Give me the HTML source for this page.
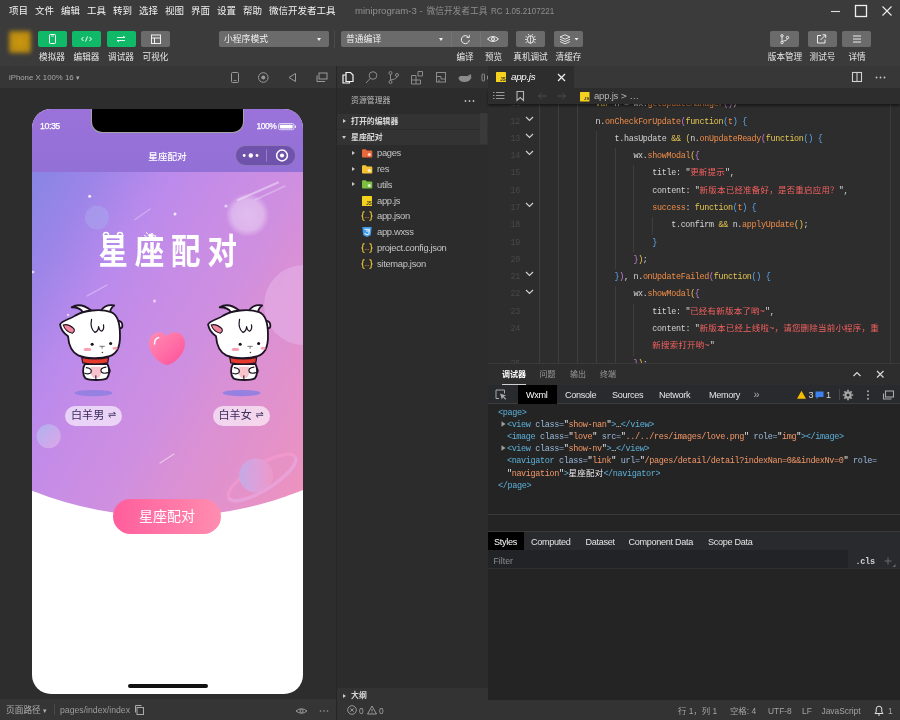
<!DOCTYPE html>
<html lang="zh-CN">
<head>
<meta charset="utf-8">
<title>微信开发者工具</title>
<style>
*{box-sizing:border-box;margin:0;padding:0}
html,body{width:900px;height:720px;overflow:hidden;background:#2d2d2d}
body{font-family:"Liberation Sans","Noto Sans CJK SC",sans-serif;font-size:9.3px;color:#ddd;position:relative;-webkit-font-smoothing:antialiased}
.a{position:absolute}
svg{position:absolute;overflow:visible}
/* ---------- top bars ---------- */
#top,#sim,#phone,#ide{will-change:transform}
#top{position:absolute;left:0;top:0;width:900px;height:66px;background:#3b3b3b}
#menu{position:absolute;left:9px;top:3px;height:16px;line-height:16px;font-size:9.5px;color:#f2f2f2;white-space:nowrap}
#menu span{display:inline-block;width:26px}
#wtitle{position:absolute;left:355px;top:3px;line-height:16px;font-size:9.6px;color:#8f8f8f;white-space:nowrap}
.tb{position:absolute;top:31px;height:16px;border-radius:2px;background:#6b6b6b}
.tb.g{background:#10b968}
.tl{position:absolute;top:49.5px;height:14px;line-height:14px;font-size:8.6px;color:#e6e6e6;text-align:center;white-space:nowrap;width:60px;margin-left:-30px}
.sel{position:absolute;top:31px;height:16px;border-radius:2px;background:#6b6b6b;color:#eee;font-size:8.8px;line-height:16px;padding-left:5px}
.sel:after{content:"";position:absolute;right:8px;top:7px;border:2.5px solid transparent;border-top:3px solid #f0f0f0}
/* ---------- simulator ---------- */
#sim{position:absolute;left:0;top:66px;width:336px;height:654px;background:#2d2d2d}
#simhead{position:absolute;left:0;top:0;width:336px;height:22px;background:#363636;font-size:7.8px;color:#a8a8a8;line-height:23px;padding-left:9px}
#simfoot{position:absolute;left:0;bottom:0;width:336px;height:21px;background:#353535;font-size:8.700px;color:#b0b0b0;line-height:22px}
#phone{position:absolute;left:32px;top:109px;width:271px;height:585px;border-radius:19px;background:#fff;overflow:hidden}
/* ---------- phone ---------- */
#phone .pg{position:absolute;left:0;top:63px;width:271px;height:346px;background:linear-gradient(120deg,#8785e3 0%,#9d85e8 14%,#b98aec 28%,#c58ce7 40%,#cf8fe0 57%,#d890d6 66%,#e892c4 91%,#f293ba 100%)}
#phone .nav{position:absolute;left:0;top:0;width:271px;height:63px;background:linear-gradient(#9a72da,#9270d6)}
#phone .notch{position:absolute;left:59px;top:-2px;width:153px;height:25.500px;background:#000;border-radius:0 0 11px 11px;border:1px solid rgba(255,255,255,.65);border-top:0}
#phone .st{color:#fff;font-size:8.800px;line-height:12px;letter-spacing:-.45px;-webkit-text-stroke:.25px #fff}
#phone .ttl{left:0;top:41px;width:271px;text-align:center;color:#fff;font-size:9.600px;line-height:14px;font-weight:500}
#phone .cap{position:absolute;left:203.400px;top:35.600px;width:61px;height:21.600px;border-radius:10.800px;background:rgba(60,40,110,.42);border:.7px solid rgba(255,255,255,.22)}
#phone .logo{left:66.500px;top:124px;width:150px;text-align:left;color:#fff;font-size:29.500px;line-height:38px;height:38px;font-weight:700;letter-spacing:6.800px;white-space:nowrap;transform:scale(1,1.2);transform-origin:0 50%}
#phone .pill{top:297px;width:57px;height:19.500px;border-radius:10px;background:rgba(255,255,255,.62);color:#3b2d5c;font-size:11.100px;line-height:19px;text-align:center;white-space:nowrap}
#phone .pill b{font-weight:normal;font-size:9.800px;position:relative;top:-.6px;margin-left:.5px;font-family:'DejaVu Sans',sans-serif}
#phone .btn{left:81px;top:389.500px;width:108px;height:35.500px;border-radius:18px;background:linear-gradient(90deg,#ff5e9c,#ff8db0);color:#fff;font-size:14px;line-height:35px;text-align:center}
#phone .home{left:95.500px;top:575px;width:80.500px;height:4px;border-radius:2px;background:#111}

/* ---------- IDE ---------- */
#ide{position:absolute;left:336px;top:66px;width:564px;height:654px;background:#2d2d2d;overflow:hidden}
#ide .vdiv{position:absolute;left:0;top:0;width:1px;height:654px;background:#262626}
#act{position:absolute;left:1px;top:0;width:151px;height:22px;background:#333}
#side{position:absolute;left:1px;top:22px;width:151px;height:612px;background:#2c2c2c}
#side .hd{position:absolute;left:14px;top:6px;font-size:7.900px;line-height:14px;color:#bdbdbd;white-space:nowrap}
#side .sec{position:absolute;left:0;width:151px;height:15px;background:#333;font-size:7.900px;font-weight:bold;color:#d8d8d8;line-height:15px;padding-left:14px;white-space:nowrap}
#side .sec i{position:absolute;left:5.500px;top:5px;border:2.500px solid transparent;border-left:3.500px solid #c8c8c8;border-right:0}
#side .sec i.d{left:4.500px;top:6px;border:2.500px solid transparent;border-top:3.500px solid #c8c8c8;border-bottom:0}
#side .row{position:absolute;left:40px;height:16px;line-height:16px;font-size:9.400px;color:#c4c4c4;white-space:nowrap;letter-spacing:-.32px}
#side .ar{position:absolute;left:14.500px;border:2.500px solid transparent;border-left:3.500px solid #c8c8c8;border-right:0}
#side .sb{position:absolute;left:143px;top:25px;width:7px;height:31px;background:#3a3a3a}
#tabs{position:absolute;left:152px;top:0;width:412px;height:22px;background:#373737}
#tabs .tab{position:absolute;left:0;top:0;width:86px;height:22px;background:#2d2d2d}
#tabs .tn{position:absolute;left:23px;top:4px;font-size:9.800px;line-height:14px;font-style:italic;color:#fff;letter-spacing:-.3px}
#crumb{position:absolute;left:152px;top:22px;width:412px;height:16px;background:#2d2d2d;z-index:3;box-shadow:0 1.500px 2px rgba(0,0,0,.45)}
#crumb .ct{position:absolute;left:106px;top:1px;font-size:9.500px;line-height:14px;color:#b8b8b8;white-space:nowrap;letter-spacing:-.2px}
.code{position:absolute;left:0;top:38px;width:564px;height:260px;overflow:hidden}
.code .cl,.wx .cl{position:absolute;white-space:pre;font-family:"Liberation Mono","Noto Sans CJK SC",monospace;font-size:8.400px;letter-spacing:-.300px;line-height:17.280px;height:17.280px;color:#d4d4d4}
.cj{letter-spacing:.2px;font-size:8.500px}
.code .ln{position:absolute;left:166px;width:18px;text-align:right;font-family:"Liberation Mono",monospace;font-size:8.400px;letter-spacing:-.300px;line-height:17.280px;color:#484848}
.code .fd{position:absolute;left:189px}
.code .gd{position:absolute;width:1px;height:17.400px;background:#3e3e3e}
#panel{position:absolute;left:152px;top:297px;width:412px;height:337px;background:#242425;border-top:1px solid #3a3a3a}
#panel .ph{position:absolute;left:0;top:0;width:412px;height:21px;background:#2d2d2d}
#panel .ph span{position:absolute;top:3.500px;font-size:8px;line-height:14px;color:#9a9a9a;white-space:nowrap}
#panel .dt{position:absolute;left:0;top:21px;width:412px;height:18.500px;background:#292a2d;border-bottom:1px solid #3c3c3c}
#panel .dt span,#panel .st span{position:absolute;top:2.500px;font-size:9.100px;line-height:14px;color:#e4e4e4;white-space:nowrap;letter-spacing:-.3px}
#panel .sel{position:absolute;background:#000;top:0;height:18.500px;border-radius:0;padding:0}
#panel .sel:after{display:none}
.wx{position:absolute;left:0;top:22px;width:412px;height:110px}
.wx .cl{line-height:12px;height:12px;font-size:8.500px;letter-spacing:-.360px}
.wx svg{position:absolute}
#panel .hr{position:absolute;left:0;top:149.500px;width:412px;height:1px;background:#3a3a3a}
#panel .st{position:absolute;left:0;top:167px;width:412px;height:19px;background:#292a2d;border-top:1px solid #3a3a3a}
#panel .fl{position:absolute;left:0;top:186px;width:412px;height:18.500px;background:linear-gradient(90deg,#222326 360px,#292a2d 360px);border-bottom:1px solid #303030;font-size:8.800px;line-height:22px;color:#8c8c8c;padding-left:5.500px}
#status{position:absolute;left:1px;top:634px;width:563px;height:20px;background:#333;font-size:8.400px;color:#a4a4a4}
#status span{position:absolute;top:4px;line-height:14px;white-space:nowrap}
#ide .vs{position:absolute;left:553.500px;top:38px;width:1px;height:259px;background:#3c3c3c}
#ide .vs2{position:absolute;left:561.500px;top:38px;width:2.500px;height:596px;background:#343434}

</style>
</head>
<body>
<div id="top">
  <div id="menu"><span>项目</span><span>文件</span><span>编辑</span><span>工具</span><span>转到</span><span>选择</span><span>视图</span><span>界面</span><span>设置</span><span>帮助</span><span style="width:auto">微信开发者工具</span></div>
  <div id="wtitle">miniprogram-3 - <span style="position:absolute;left:71.500px;top:0;font-size:8.700px">微信开发者工具</span><span style="position:absolute;left:136px;top:0;display:inline-block;transform:scaleX(.84);transform-origin:0 50%">RC 1.05.2107221</span></div>
  <!-- window controls -->
  <svg class="a" style="left:826px;top:0" width="74" height="22" viewBox="0 0 74 22">
    <path d="M5 11.5h9" stroke="#ddd" stroke-width="1.1" fill="none"/>
    <rect x="29.5" y="5.5" width="11" height="11" stroke="#eee" stroke-width="1.3" fill="none"/>
    <path d="M56.5 6.5l9 9M65.5 6.5l-9 9" stroke="#eee" stroke-width="1.1" fill="none"/>
  </svg>
  <!-- avatar -->
  <div class="a" style="left:9px;top:31px;width:22px;height:22px;border-radius:2px;background:radial-gradient(circle,#cc970e 10%,#a88014 100%);filter:blur(2px)"></div>
  <!-- left buttons -->
  <div class="tb g" style="left:37.500px;width:29px"></div>
  <div class="tb g" style="left:72px;width:29px"></div>
  <div class="tb g" style="left:106.5px;width:29px"></div>
  <div class="tb" style="left:141px;width:29px"></div>
  <div class="tl" style="left:52px">模拟器</div>
  <div class="tl" style="left:86.5px">编辑器</div>
  <div class="tl" style="left:121px">调试器</div>
  <div class="tl" style="left:155.5px">可视化</div>
  <svg class="a" style="left:38px;top:31px" width="132" height="16" viewBox="0 0 132 16" fill="none" stroke="#fff" stroke-width="1">
    <rect x="11.5" y="3.5" width="6" height="9" rx="0.8"/><path d="M13 5h3" stroke-width=".8"/>
    <path d="M45.5 6l-2 2 2 2M51.500 6l2 2-2 2M49.500 5.500l-2 5"/>
    <path d="M79 6.500h8l-2-1.500M87 9.500h-8l2 1.500" stroke-width=".9"/>
    <rect x="113.500" y="4" width="9" height="8.500" stroke="#f0f0f0"/><path d="M113.500 7h9M116.500 7v5.500" stroke="#f0f0f0"/>
  </svg>
  <!-- selects -->
  <div class="sel" style="left:219px;width:109.500px">小程序模式</div>
  <div class="a" style="left:334px;top:30px;width:1px;height:18px;background:#4a4a4a"></div>
  <div class="sel" style="left:341px;width:110px;border-radius:2px 0 0 2px">普通编译</div>
  <div class="tb" style="left:451px;width:28.500px;border-radius:0;border-left:1px solid #747474"></div>
  <div class="tb" style="left:479.500px;width:28px;border-radius:0 2px 2px 0;border-left:1px solid #747474"></div>
  <div class="tb" style="left:516px;width:29px"></div>
  <div class="tb" style="left:553.500px;width:29px"></div>
  <div class="tl" style="left:465px">编译</div>
  <div class="tl" style="left:493.500px">预览</div>
  <div class="tl" style="left:530.500px">真机调试</div>
  <div class="tl" style="left:568.500px">清缓存</div>
  <svg class="a" style="left:451px;top:31px" width="132" height="16" viewBox="0 0 132 16" fill="none" stroke="#eee" stroke-width="1">
    <path d="M17.500 6.200a4 4 0 1 0 .8 3"/><path d="M18.300 3.800v2.700h-2.700" stroke-width=".9"/>
    <path d="M36.500 8q5.500-5 11 0q-5.500 5-11 0z"/><circle cx="42" cy="8" r="1.500"/>
    <ellipse cx="79.500" cy="8.500" rx="3" ry="3.800"/><path d="M79.500 5v7.300M76.500 6.500l-2-1.200M82.500 6.500l2-1.200M76.300 8.500h-2.300M82.700 8.500h2.300M76.500 10.500l-2 1.200M82.500 10.500l2 1.200M78 4.500l-.8-1.500M81 4.500l.8-1.500" stroke-width=".8"/>
    <path d="M109 6l5-2.200 5 2.200-5 2.200zM109 8.300l5 2.200 5-2.200M109 10.600l5 2.200 5-2.200" stroke-width=".9"/>
    <path d="M123.500 7h4l-2 2.500z" fill="#eee" stroke="none"/>
  </svg>
  <!-- right buttons -->
  <div class="tb" style="left:770px;width:29px"></div>
  <div class="tb" style="left:807.500px;width:29px"></div>
  <div class="tb" style="left:842.200px;width:29px"></div>
  <div class="tl" style="left:785px">版本管理</div>
  <div class="tl" style="left:822.500px">测试号</div>
  <div class="tl" style="left:857px">详情</div>
  <svg class="a" style="left:770px;top:31px" width="102" height="16" viewBox="0 0 102 16" fill="none" stroke="#eee" stroke-width="1">
    <circle cx="12" cy="4.800" r="1.200"/><circle cx="12" cy="11.500" r="1.200"/><circle cx="17.500" cy="6.500" r="1.200"/><path d="M12 6v4.300M17.500 7.700q0 2-5 2.600" stroke-width=".9"/>
    <path d="M51 4.500h-3.500v7.500h7.500v-3.500M50.500 9l5-5M52.500 3.800h3.200v3.200"/>
    <path d="M83 5h8M83 8h8M83 11h8"/>
  </svg>
</div>

<div id="sim">
  <div id="simhead">iPhone X 100% 16 <span style="font-size:7px">▾</span></div>
  <svg class="a" style="left:225px;top:0" width="110" height="22" viewBox="0 0 110 22" fill="none" stroke="#9a9a9a" stroke-width="1">
    <rect x="6.500" y="6.500" width="7" height="10" rx="1"/><path d="M8.500 14.500h3" stroke-width=".8"/>
    <circle cx="38.300" cy="11.500" r="4.800"/><circle cx="38.300" cy="11.500" r="2" fill="#9a9a9a" stroke="none"/>
    <path d="M70.500 7.500v8l-6.500-4z"/>
    <rect x="94" y="7" width="8" height="6"/><path d="M92 9.500v6h8"/>
  </svg>
  <div id="simfoot">
    <span class="a" style="left:6px;top:0">页面路径 <span style="font-size:7px">▾</span></span>
    <span class="a" style="left:54px;top:5px;width:1px;height:11px;background:#4a4a4a"></span>
    <span class="a" style="left:60px;top:0;color:#9c9c9c">pages/index/index</span>
    <svg class="a" style="left:134px;top:5px" width="12" height="12" viewBox="0 0 12 12" fill="none" stroke="#aaa" stroke-width="1"><rect x="3" y="3.500" width="6.500" height="7"/><path d="M1.500 8.500v-7h6"/></svg>
    <svg class="a" style="left:294.500px;top:6.500px" width="40" height="10" viewBox="0 0 40 10" fill="none" stroke="#9a9a9a" stroke-width="1"><path d="M1 5q5.500-4.500 11 0q-5.500 4.500-11 0z"/><circle cx="6.500" cy="5" r="1.500"/><circle cx="25.500" cy="5" r=".8" fill="#9a9a9a" stroke="none"/><circle cx="29" cy="5" r=".8" fill="#9a9a9a" stroke="none"/><circle cx="32.500" cy="5" r=".8" fill="#9a9a9a" stroke="none"/></svg>
  </div>
</div>
<div id="phone"><div class="pg"></div>
<svg class="a" style="left:0;top:63px" width="271" height="360" viewBox="0 0 271 360">
  <defs>
    <radialGradient id="gl" cx="50%" cy="50%" r="50%"><stop offset="0" stop-color="#fff" stop-opacity=".42"/><stop offset=".7" stop-color="#fff" stop-opacity=".34"/><stop offset="1" stop-color="#fff" stop-opacity="0"/></radialGradient>
    <linearGradient id="pl" x1="0" y1="0" x2="1" y2="0"><stop offset="0" stop-color="#b8b4f0"/><stop offset=".5" stop-color="#d8a8e4"/><stop offset="1" stop-color="#f09cc8"/></linearGradient>
    <linearGradient id="hg" x1="0" y1="0" x2="1" y2="1"><stop offset="0" stop-color="#ff8cb4"/><stop offset=".5" stop-color="#ff6fa6"/><stop offset="1" stop-color="#ff4f98"/></linearGradient>
    <linearGradient id="c3" x1="0" y1="0" x2="1" y2="1"><stop offset="0" stop-color="#a9c2f2" stop-opacity=".7"/><stop offset="1" stop-color="#e9b0e6" stop-opacity=".7"/></linearGradient>
  </defs>
  <!-- decorative circles -->
  <circle cx="65" cy="45.500" r="12" fill="#a9a4ee" opacity=".6"/>
  <circle cx="215.500" cy="43" r="22" fill="url(#gl)"/>
  <circle cx="272" cy="133" r="40" fill="#e6b4ea" opacity=".55"/>
  <circle cx="16.700" cy="264.300" r="12" fill="url(#c3)"/>
  <!-- streaks -->
  <g stroke="#fff" stroke-linecap="round" fill="none">
    <path d="M103 47.500L118 37" stroke-width="1.400" opacity=".3"/>
    <path d="M206 28L246 10.500" stroke-width="2" opacity=".4"/>
    <path d="M223 28L253 14" stroke-width="1.600" opacity=".28"/>
    <path d="M55 124L75 113" stroke-width="1.400" opacity=".35"/>
    <path d="M128 291L142 282" stroke-width="1.200" opacity=".5"/>
  </g>
  <!-- stars -->
  <g fill="#fff">
    <circle cx="57.700" cy="24.300" r="1.500" opacity=".85"/>
    <circle cx="143" cy="42" r="1.500" opacity=".8"/>
    <circle cx="194" cy="34" r="1.600" opacity=".6"/>
    <circle cx="1" cy="100" r="1.300" opacity=".7"/>
    <circle cx="122.500" cy="129" r="1.500" opacity=".6"/>
    <circle cx="36" cy="143" r="1.300" opacity=".6"/>
  </g>
  <!-- planet -->
  <g opacity=".7">
    <ellipse cx="230" cy="305.500" rx="39" ry="12.500" transform="rotate(-32 230 305.500)" fill="none" stroke="#f59bd0" stroke-width="3.200"/>
    <circle cx="224" cy="303.500" r="17" fill="url(#pl)"/>
    <path d="M-39 0a39 12.500 0 0 0 78 0" transform="translate(230 305.500) rotate(-32)" fill="none" stroke="#e9a9e2" stroke-width="3.200"/>
  </g>
</svg>
<!-- white arc bottom -->
<svg class="a" style="left:0;top:370px" width="271" height="60" viewBox="0 0 271 60"><path d="M0 11.800A366 366 0 0 0 271 11V60H0z" fill="#fff"/></svg>
<!-- nav -->
<div class="nav"></div>
<div class="notch"></div>
<div class="a st" style="left:8px;top:11px;">10:35</div>
<div class="a st" style="left:224.500px;top:11px;font-size:8.500px">100%</div>
<svg class="a" style="left:246.300px;top:13.800px" width="19" height="8" viewBox="0 0 19 8"><rect x=".5" y=".5" width="15.500" height="6.200" rx="1.600" fill="none" stroke="#fff" stroke-opacity=".75" stroke-width=".9"/><rect x="1.800" y="1.800" width="12.900" height="3.600" rx=".8" fill="#fff"/><rect x="16.800" y="2.300" width="1.200" height="2.600" rx=".5" fill="#fff" fill-opacity=".8"/></svg>
<div class="a ttl">星座配对</div>
<div class="cap"></div>
<svg class="a" style="left:204px;top:36px" width="60" height="21" viewBox="0 0 60 21"><circle cx="8.200" cy="10.500" r="1.400" fill="#fff"/><circle cx="14.800" cy="10.500" r="2.200" fill="#fff"/><circle cx="21" cy="10.500" r="1.400" fill="#fff"/><path d="M30.500 4.500v12" stroke="#fff" stroke-opacity=".35" stroke-width=".8"/><circle cx="46" cy="10.500" r="5.400" fill="none" stroke="#fff" stroke-width="1.500"/><circle cx="46" cy="10.500" r="2.100" fill="#fff"/></svg>
<!-- logo -->
<div class="a logo">星座配对</div>
<svg class="a" style="left:76px;top:120px" width="70" height="18" viewBox="0 0 70 18" fill="none" stroke="#fff" stroke-width="1.300" stroke-linecap="round"><path d="M43 6.500l1.300-2.200 1.300 2.200 2.300.4-1.700 1.700.4 2.400-2.300-1.100-2.300 1.100.4-2.400-1.700-1.700z" stroke-width="1"/><path d="M38.500 3.500l1.200 1.500M36.500 6.500l1.600.9" stroke-width="1"/></svg>
<svg class="a" style="left:66px;top:120px" width="40" height="12" viewBox="0 0 40 12" fill="none" stroke="#fff" stroke-width="1.500"><circle cx="8" cy="6" r="2.600"/><circle cx="22" cy="6" r="2.600"/></svg>
<!-- goats -->
<svg class="a goat" style="left:18px;top:186px" width="90" height="110" viewBox="0 0 589 720"><use href="#goat"/></svg>
<svg class="a goat" style="left:166px;top:186px" width="90" height="110" viewBox="0 0 589 720"><use href="#goat"/></svg>
<svg class="a" style="left:0;top:0" width="0" height="0"><defs><g id="goat">
  <ellipse cx="285" cy="642" rx="124" ry="21" fill="#9680e2"/>
  <g stroke="#1d1322" stroke-width="12" stroke-linejoin="round" stroke-linecap="round">
    <path d="M378 478q20 10 10 30" fill="none"/>
    <path d="M228 452C212 480 212 522 232 546C260 560 345 560 372 546C392 522 390 478 376 452z" fill="#fff"/>
    <path d="M268 470q-14 40 14 72h38q26-32 14-72z" fill="#f9c3cc" stroke="none"/>
    <path d="M238 476q42 6 30 32q-14 14 -40 4M366 472q-42 6 -30 32q14 14 40 4" fill="#fff" stroke-width="8"/>
    <path d="M300 528v24" fill="none" stroke-width="7"/>
    <path d="M208 408q88 20 176 0l-6 36q-82 16 -164 0z" fill="#e63a2e" stroke-width="8"/>
    <path d="M142 80Q200 46 268 100L215 114Q200 80 142 80z" fill="#fff"/>
    <path d="M335 102Q360 60 420 68Q395 85 392 116z" fill="#fff"/>
    <path d="M455 170q22 10 18 38q-6 14 -20 8" fill="#fff"/>
    <path d="M66 192C80 165 130 160 165 135C220 100 330 88 400 112C440 128 458 190 458 260C460 330 440 385 390 400C330 418 240 418 185 395C145 375 122 330 118 270C90 250 70 225 66 192z" fill="#fff"/>
    <path d="M86 196q34 -10 70 24q10 20 -10 30q-44 -8 -60 -54z" fill="#f2849c" stroke-width="7"/>
    <path d="M272 160q-12 60 22 85q22 -8 24 -38q6 28 20 30q18 -12 12 -42" fill="none" stroke-width="8"/>
  </g>
  <circle cx="276" cy="322" r="10" fill="#1d1322"/><circle cx="397" cy="318" r="10" fill="#1d1322"/>
  <ellipse cx="245" cy="356" rx="25" ry="11" fill="#f9a0b4"/><ellipse cx="426" cy="348" rx="17" ry="10" fill="#f9a0b4"/>
  <path d="M326 336h30M341 336v14" stroke="#555" stroke-width="5" fill="none" stroke-linecap="round"/><circle cx="343" cy="376" r="5" fill="#444"/>
</g></defs></svg>
<!-- heart -->
<svg class="a" style="left:114px;top:220px" width="42" height="40" viewBox="0 0 42 40"><defs><filter id="hb" x="-20%" y="-20%" width="140%" height="140%"><feGaussianBlur stdDeviation=".7"/></filter></defs><path d="M21 36C17.500 36 3 27.500 3 14.500C3 7.500 7.800 3.200 13 3.200C16.500 3.200 19.500 5 21 7.300C22.500 5 25.500 3.200 29 3.200C34.200 3.200 39 7.500 39 14.500C39 27.500 24.500 36 21 36z" fill="url(#hg)" filter="url(#hb)"/><path d="M8.500 15q-.3-5 4.200-6.500" fill="none" stroke="#fff" stroke-width="1.600" stroke-linecap="round" opacity=".9"/></svg>
<!-- pills -->
<div class="a pill" style="left:33px">白羊男 <b>⇌</b></div>
<div class="a pill" style="left:180.500px">白羊女 <b>⇌</b></div>
<!-- button -->
<div class="a btn">星座配对</div>
<div class="a home"></div>
</div>
<div id="ide"><div class="vdiv"></div>
<div id="act">
<svg style="left:4px;top:3px" width="140" height="16" viewBox="0 0 140 16" fill="none" stroke="#8c8c8c" stroke-width="1">
  <g stroke="#f4f4f4" stroke-width="1.200"><path d="M5 3.500h4.500l2.500 2.500v6.500h-7z"/><path d="M5 6h-3v8h6.500v-1.500"/></g>
  <circle cx="32" cy="6.500" r="3.800"/><path d="M29.300 9.300l-4.300 4.700"/>
  <circle cx="49.500" cy="4" r="1.500"/><circle cx="49.500" cy="13" r="1.500"/><circle cx="56" cy="6" r="1.500"/><path d="M49.500 5.500v6M56 7.500q0 2.500-6.500 3.500"/>
  <path d="M70.500 6.500h4.500v4.500h4.500v4h-9zM70.500 11h4.500v4M77 2.500h4.500v4.500h-4.500z"/>
  <rect x="95.500" y="3.500" width="9" height="9.500"/><path d="M95.500 7.500h4.500v2.500h4.500M98 13v-2.500"/>
  <path d="M118 9q0-1.500 2-1.500h7q1-2 3-1.500q-1 1.500 0 2.500q-1 4-6 4q-6 0-6-3.500z" fill="#8c8c8c"/>
  <rect x="141" y="5" width="2.500" height="7" rx="1"/><path d="M146 7l3-2v7l-3-2z" fill="#8c8c8c" stroke="none"/>
</svg>
</div>
<div id="side">
  <div class="hd">资源管理器</div>
  <svg style="left:127px;top:11px" width="12" height="4" viewBox="0 0 12 4" fill="#c0c0c0"><circle cx="1.500" cy="2" r=".9"/><circle cx="5.500" cy="2" r=".9"/><circle cx="9.500" cy="2" r=".9"/></svg>
  <div class="sec" style="top:25.500px"><i></i>打开的编辑器</div>
  <div class="sec" style="top:41.500px"><i class="d"></i>星座配对</div>
  <div class="sb"></div>
  <i class="ar" style="top:62.8px"></i>
<svg style="left:24.500px;top:60.8px" width="10.300" height="8.600" viewBox="0 0 11 9"><path d="M0 1.200q0-1 1-1h3l1.200 1.300h4.800q1 0 1 1v5.500q0 1-1 1h-9q-1 0-1-1z" fill="#e8683c"/><circle cx="7.800" cy="5.800" r="1.700" fill="#fff" fill-opacity=".75"/></svg>
<div class="row" style="top:57.3px">pages</div>
<i class="ar" style="top:78.6px"></i>
<svg style="left:24.500px;top:76.6px" width="10.300" height="8.600" viewBox="0 0 11 9"><path d="M0 1.200q0-1 1-1h3l1.200 1.300h4.800q1 0 1 1v5.500q0 1-1 1h-9q-1 0-1-1z" fill="#f5c236"/><circle cx="7.800" cy="5.800" r="1.700" fill="#fff" fill-opacity=".75"/></svg>
<div class="row" style="top:73.1px">res</div>
<i class="ar" style="top:94.3px"></i>
<svg style="left:24.500px;top:92.3px" width="10.300" height="8.600" viewBox="0 0 11 9"><path d="M0 1.200q0-1 1-1h3l1.200 1.300h4.800q1 0 1 1v5.500q0 1-1 1h-9q-1 0-1-1z" fill="#7bc043"/><circle cx="7.800" cy="5.800" r="1.700" fill="#fff" fill-opacity=".75"/></svg>
<div class="row" style="top:88.8px">utils</div>
<svg style="left:25px;top:107.8px" width="10" height="10" viewBox="0 0 10 10"><rect width="10" height="10" rx=".6" fill="#f5d11d"/><text x="4.300" y="8.800" font-family="Liberation Sans,sans-serif" font-size="4.500" font-weight="bold" fill="#333">JS</text></svg>
<div class="row" style="top:104.6px">app.js</div>
<svg style="left:24px;top:123.4px" width="12" height="10" viewBox="0 0 12 10" fill="none" stroke="#f0c33c" stroke-width="1.100"><path d="M3.500 .6q-1.700 0-1.700 1.500v1.500q0 1.200-1.200 1.400q1.200 .2 1.200 1.400v1.500q0 1.500 1.700 1.500M8.500 .6q1.700 0 1.700 1.500v1.500q0 1.200 1.200 1.400q-1.200 .2-1.200 1.400v1.500q0 1.500-1.700 1.500"/><path d="M4.500 6.500h.8M6.700 6.500h.8" stroke-width=".9"/></svg>
<div class="row" style="top:120.4px">app.json</div>
<svg style="left:25px;top:139.3px" width="10" height="10" viewBox="0 0 10 10"><path d="M.3 0h9.400l-.9 8.200-3.800 1.800-3.800-1.800z" fill="#3f9ae8"/><path d="M2.500 2.300h5l-.2 1.700h-3.300M7.200 4.200l-.3 2.800-1.900.8-1.900-.8-.1-1" fill="none" stroke="#fff" stroke-width=".9"/></svg>
<div class="row" style="top:136.2px">app.wxss</div>
<svg style="left:24px;top:154.9px" width="12" height="10" viewBox="0 0 12 10" fill="none" stroke="#f0c33c" stroke-width="1.100"><path d="M3.500 .6q-1.700 0-1.700 1.500v1.500q0 1.200-1.200 1.400q1.200 .2 1.200 1.400v1.500q0 1.500 1.700 1.500M8.500 .6q1.700 0 1.700 1.500v1.500q0 1.200 1.200 1.400q-1.200 .2-1.200 1.400v1.500q0 1.500-1.700 1.500"/><path d="M4.500 6.500h.8M6.700 6.500h.8" stroke-width=".9"/></svg>
<div class="row" style="top:151.9px">project.config.json</div>
<svg style="left:24px;top:170.7px" width="12" height="10" viewBox="0 0 12 10" fill="none" stroke="#f0c33c" stroke-width="1.100"><path d="M3.500 .6q-1.700 0-1.700 1.500v1.500q0 1.200-1.200 1.400q1.200 .2 1.200 1.400v1.500q0 1.500 1.700 1.500M8.500 .6q1.700 0 1.700 1.500v1.500q0 1.200 1.200 1.400q-1.200 .2-1.200 1.400v1.500q0 1.500-1.700 1.500"/><path d="M4.500 6.500h.8M6.700 6.500h.8" stroke-width=".9"/></svg>
<div class="row" style="top:167.7px">sitemap.json</div>

  <div class="sec" style="top:599.500px;height:14px;line-height:16px"><i style="top:6px"></i>大纲</div>
</div>
<div id="tabs">
  <div class="tab"></div>
  <svg style="left:8px;top:6px" width="10" height="10" viewBox="0 0 10 10"><rect width="10" height="10" rx=".6" fill="#f5d11d"/><text x="4.300" y="8.800" font-family="Liberation Sans,sans-serif" font-size="4.500" font-weight="bold" fill="#333">JS</text></svg>
  <div class="tn">app.js</div>
  <svg style="left:69px;top:6.500px" width="9" height="9" viewBox="0 0 9 9"><path d="M1 1l7 7M8 1l-7 7" stroke="#f0f0f0" stroke-width="1.200" fill="none"/></svg>
  <svg style="left:363px;top:5px" width="40" height="12" viewBox="0 0 40 12" fill="none" stroke="#d0d0d0" stroke-width="1.100"><rect x="1.500" y="1.500" width="9" height="9"/><path d="M6 1.500v9"/><g fill="#c8c8c8" stroke="none"><circle cx="25.500" cy="6.500" r=".9"/><circle cx="29.500" cy="6.500" r=".9"/><circle cx="33.500" cy="6.500" r=".9"/></g></svg>
</div>
<div id="crumb">
  <svg style="left:5px;top:3px" width="80" height="10" viewBox="0 0 80 10" fill="none" stroke="#9a9a9a" stroke-width="1"><path d="M0 1.500h1.500M3 1.500h8.500M0 4.500h1.500M3 4.500h8.500M0 7.500h1.500M3 7.500h8.500" /><path d="M24 .5h6.500v9l-3.250-3-3.250 3z" stroke="#b4b4b4" stroke-width="1.100"/><g stroke="#4c4c4c"><path d="M54 5h-8.500M48.500 2l-3 3 3 3"/><path d="M64 5h8.500M69.500 2l3 3-3 3"/></g></svg>
  <svg style="left:92px;top:3.500px" width="9.500" height="9.500" viewBox="0 0 10 10"><rect width="10" height="10" rx=".6" fill="#f5d11d"/><text x="4.300" y="8.800" font-family="Liberation Sans,sans-serif" font-size="4.500" font-weight="bold" fill="#333">JS</text></svg>
  <div class="ct">app.js <span style="font-family:'DejaVu Sans',sans-serif;font-size:8px">&gt;</span> …</div>
</div>
<div class="code">
<i class="gd" style="left:203.0px;top:-7.68px"></i>
<i class="gd" style="left:221.9px;top:-7.68px"></i>
<i class="gd" style="left:240.8px;top:-7.68px"></i>
<i class="gd" style="left:203.0px;top:9.60px"></i>
<i class="gd" style="left:221.9px;top:9.60px"></i>
<i class="gd" style="left:240.8px;top:9.60px"></i>
<i class="gd" style="left:203.0px;top:26.88px"></i>
<i class="gd" style="left:221.9px;top:26.88px"></i>
<i class="gd" style="left:240.8px;top:26.88px"></i>
<i class="gd" style="left:259.6px;top:26.88px"></i>
<i class="gd" style="left:203.0px;top:44.16px"></i>
<i class="gd" style="left:221.9px;top:44.16px"></i>
<i class="gd" style="left:240.8px;top:44.16px"></i>
<i class="gd" style="left:259.6px;top:44.16px"></i>
<i class="gd" style="left:278.5px;top:44.16px"></i>
<i class="gd" style="left:203.0px;top:61.44px"></i>
<i class="gd" style="left:221.9px;top:61.44px"></i>
<i class="gd" style="left:240.8px;top:61.44px"></i>
<i class="gd" style="left:259.6px;top:61.44px"></i>
<i class="gd" style="left:278.5px;top:61.44px"></i>
<i class="gd" style="left:297.4px;top:61.44px"></i>
<i class="gd" style="left:203.0px;top:78.72px"></i>
<i class="gd" style="left:221.9px;top:78.72px"></i>
<i class="gd" style="left:240.8px;top:78.72px"></i>
<i class="gd" style="left:259.6px;top:78.72px"></i>
<i class="gd" style="left:278.5px;top:78.72px"></i>
<i class="gd" style="left:297.4px;top:78.72px"></i>
<i class="gd" style="left:203.0px;top:96.00px"></i>
<i class="gd" style="left:221.9px;top:96.00px"></i>
<i class="gd" style="left:240.8px;top:96.00px"></i>
<i class="gd" style="left:259.6px;top:96.00px"></i>
<i class="gd" style="left:278.5px;top:96.00px"></i>
<i class="gd" style="left:297.4px;top:96.00px"></i>
<i class="gd" style="left:203.0px;top:113.28px"></i>
<i class="gd" style="left:221.9px;top:113.28px"></i>
<i class="gd" style="left:240.8px;top:113.28px"></i>
<i class="gd" style="left:259.6px;top:113.28px"></i>
<i class="gd" style="left:278.5px;top:113.28px"></i>
<i class="gd" style="left:297.4px;top:113.28px"></i>
<i class="gd" style="left:316.3px;top:113.28px"></i>
<i class="gd" style="left:203.0px;top:130.56px"></i>
<i class="gd" style="left:221.9px;top:130.56px"></i>
<i class="gd" style="left:240.8px;top:130.56px"></i>
<i class="gd" style="left:259.6px;top:130.56px"></i>
<i class="gd" style="left:278.5px;top:130.56px"></i>
<i class="gd" style="left:297.4px;top:130.56px"></i>
<i class="gd" style="left:203.0px;top:147.84px"></i>
<i class="gd" style="left:221.9px;top:147.84px"></i>
<i class="gd" style="left:240.8px;top:147.84px"></i>
<i class="gd" style="left:259.6px;top:147.84px"></i>
<i class="gd" style="left:278.5px;top:147.84px"></i>
<i class="gd" style="left:203.0px;top:165.12px"></i>
<i class="gd" style="left:221.9px;top:165.12px"></i>
<i class="gd" style="left:240.8px;top:165.12px"></i>
<i class="gd" style="left:259.6px;top:165.12px"></i>
<i class="gd" style="left:203.0px;top:182.40px"></i>
<i class="gd" style="left:221.9px;top:182.40px"></i>
<i class="gd" style="left:240.8px;top:182.40px"></i>
<i class="gd" style="left:259.6px;top:182.40px"></i>
<i class="gd" style="left:278.5px;top:182.40px"></i>
<i class="gd" style="left:203.0px;top:199.68px"></i>
<i class="gd" style="left:221.9px;top:199.68px"></i>
<i class="gd" style="left:240.8px;top:199.68px"></i>
<i class="gd" style="left:259.6px;top:199.68px"></i>
<i class="gd" style="left:278.5px;top:199.68px"></i>
<i class="gd" style="left:297.4px;top:199.68px"></i>
<i class="gd" style="left:203.0px;top:216.96px"></i>
<i class="gd" style="left:221.9px;top:216.96px"></i>
<i class="gd" style="left:240.8px;top:216.96px"></i>
<i class="gd" style="left:259.6px;top:216.96px"></i>
<i class="gd" style="left:278.5px;top:216.96px"></i>
<i class="gd" style="left:297.4px;top:216.96px"></i>
<i class="gd" style="left:203.0px;top:234.24px"></i>
<i class="gd" style="left:221.9px;top:234.24px"></i>
<i class="gd" style="left:240.8px;top:234.24px"></i>
<i class="gd" style="left:259.6px;top:234.24px"></i>
<i class="gd" style="left:278.5px;top:234.24px"></i>
<i class="gd" style="left:297.4px;top:234.24px"></i>
<i class="gd" style="left:203.0px;top:251.52px"></i>
<i class="gd" style="left:221.9px;top:251.52px"></i>
<i class="gd" style="left:240.8px;top:251.52px"></i>
<i class="gd" style="left:259.6px;top:251.52px"></i>
<i class="gd" style="left:278.5px;top:251.52px"></i>
<span class="ln" style="top:-7.68px">11</span>
<div class="cl" style="left:259.6px;top:-7.68px"><span style="color:#e6c650">var</span><span style="color:#d4d4d4"> n = wx.</span><span style="color:#f08d49">getUpdateManager</span><span style="color:#c77ddb">()</span><span style="color:#d4d4d4">;</span></div>
<span class="ln" style="top:9.60px">12</span>
<svg class="fd" style="top:11.70px" width="9" height="6" viewBox="0 0 9 6"><path d="M1 1l3.500 3.500 3.500-3.500" fill="none" stroke="#cfcfcf" stroke-width="1.200"/></svg>
<div class="cl" style="left:259.6px;top:9.60px"><span style="color:#d4d4d4">n.</span><span style="color:#f08d49">onCheckForUpdate</span><span style="color:#c77ddb">(</span><span style="color:#e6c650">function</span><span style="color:#5aa9f0">(</span><span style="color:#f08d49">t</span><span style="color:#5aa9f0">)</span><span style="color:#d4d4d4"> </span><span style="color:#5aa9f0">{</span></div>
<span class="ln" style="top:26.88px">13</span>
<svg class="fd" style="top:28.98px" width="9" height="6" viewBox="0 0 9 6"><path d="M1 1l3.500 3.500 3.500-3.500" fill="none" stroke="#cfcfcf" stroke-width="1.200"/></svg>
<div class="cl" style="left:278.5px;top:26.88px"><span style="color:#d4d4d4">t.hasUpdate </span><span style="color:#e6c650">&amp;&amp;</span><span style="color:#d4d4d4"> </span><span style="color:#e6c650">(</span><span style="color:#d4d4d4">n.</span><span style="color:#f08d49">onUpdateReady</span><span style="color:#c77ddb">(</span><span style="color:#e6c650">function</span><span style="color:#5aa9f0">()</span><span style="color:#d4d4d4"> </span><span style="color:#5aa9f0">{</span></div>
<span class="ln" style="top:44.16px">14</span>
<svg class="fd" style="top:46.26px" width="9" height="6" viewBox="0 0 9 6"><path d="M1 1l3.500 3.500 3.500-3.500" fill="none" stroke="#cfcfcf" stroke-width="1.200"/></svg>
<div class="cl" style="left:297.4px;top:44.16px"><span style="color:#d4d4d4">wx.</span><span style="color:#f08d49">showModal</span><span style="color:#e6c650">(</span><span style="color:#c77ddb">{</span></div>
<span class="ln" style="top:61.44px">15</span>
<div class="cl" style="left:316.3px;top:61.44px"><span style="color:#d4d4d4">title: </span><span style="color:#d4d4d4">"</span><span style="color:#f2605f" class=cj>更新提示</span><span style="color:#d4d4d4">",</span></div>
<span class="ln" style="top:78.72px">16</span>
<div class="cl" style="left:316.3px;top:78.72px"><span style="color:#d4d4d4">content: </span><span style="color:#d4d4d4">"</span><span style="color:#f2605f" class=cj>新版本已经准备好，是否重启应用？</span><span style="color:#d4d4d4">",</span></div>
<span class="ln" style="top:96.00px">17</span>
<svg class="fd" style="top:98.10px" width="9" height="6" viewBox="0 0 9 6"><path d="M1 1l3.500 3.500 3.500-3.500" fill="none" stroke="#cfcfcf" stroke-width="1.200"/></svg>
<div class="cl" style="left:316.3px;top:96.00px"><span style="color:#f08d49">success</span><span style="color:#d4d4d4">: </span><span style="color:#e6c650">function</span><span style="color:#5aa9f0">(</span><span style="color:#f08d49">t</span><span style="color:#5aa9f0">)</span><span style="color:#d4d4d4"> </span><span style="color:#5aa9f0">{</span></div>
<span class="ln" style="top:113.28px">18</span>
<div class="cl" style="left:335.2px;top:113.28px"><span style="color:#d4d4d4">t.confirm </span><span style="color:#e6c650">&amp;&amp;</span><span style="color:#d4d4d4"> n.</span><span style="color:#f08d49">applyUpdate</span><span style="color:#e6c650">()</span><span style="color:#d4d4d4">;</span></div>
<span class="ln" style="top:130.56px">19</span>
<div class="cl" style="left:316.3px;top:130.56px"><span style="color:#5aa9f0">}</span></div>
<span class="ln" style="top:147.84px">20</span>
<div class="cl" style="left:297.4px;top:147.84px"><span style="color:#c77ddb">}</span><span style="color:#e6c650">)</span><span style="color:#d4d4d4">;</span></div>
<span class="ln" style="top:165.12px">21</span>
<svg class="fd" style="top:167.22px" width="9" height="6" viewBox="0 0 9 6"><path d="M1 1l3.500 3.500 3.500-3.500" fill="none" stroke="#cfcfcf" stroke-width="1.200"/></svg>
<div class="cl" style="left:278.5px;top:165.12px"><span style="color:#5aa9f0">}</span><span style="color:#c77ddb">)</span><span style="color:#d4d4d4">, n.</span><span style="color:#f08d49">onUpdateFailed</span><span style="color:#c77ddb">(</span><span style="color:#e6c650">function</span><span style="color:#5aa9f0">()</span><span style="color:#d4d4d4"> </span><span style="color:#5aa9f0">{</span></div>
<span class="ln" style="top:182.40px">22</span>
<svg class="fd" style="top:184.50px" width="9" height="6" viewBox="0 0 9 6"><path d="M1 1l3.500 3.500 3.500-3.500" fill="none" stroke="#cfcfcf" stroke-width="1.200"/></svg>
<div class="cl" style="left:297.4px;top:182.40px"><span style="color:#d4d4d4">wx.</span><span style="color:#f08d49">showModal</span><span style="color:#e6c650">(</span><span style="color:#c77ddb">{</span></div>
<span class="ln" style="top:199.68px">23</span>
<div class="cl" style="left:316.3px;top:199.68px"><span style="color:#d4d4d4">title: </span><span style="color:#d4d4d4">"</span><span style="color:#f2605f" class=cj>已经有新版本了哟~</span><span style="color:#d4d4d4">",</span></div>
<span class="ln" style="top:216.96px">24</span>
<div class="cl" style="left:316.3px;top:216.96px"><span style="color:#d4d4d4">content: </span><span style="color:#d4d4d4">"</span><span style="color:#f2605f" class=cj>新版本已经上线啦~，请您删除当前小程序，重</span></div>
<div class="cl" style="left:316.3px;top:234.24px"><span style="color:#f2605f" class=cj>新搜索打开哟~</span><span style="color:#d4d4d4">"</span></div>
<span class="ln" style="top:251.52px">25</span>
<div class="cl" style="left:297.4px;top:251.52px"><span style="color:#c77ddb">}</span><span style="color:#e6c650">)</span><span style="color:#d4d4d4">;</span></div>
</div>

<div class="vs"></div>
<div id="panel">
  <div class="ph">
    <span style="left:14px;color:#fff;font-weight:bold">调试器</span>
    <i class="a" style="left:14px;top:19.500px;width:24px;height:1px;background:#d0d0d0"></i>
    <span style="left:51.500px">问题</span><span style="left:82px">输出</span><span style="left:112px">终端</span>
    <svg style="left:364px;top:6px" width="36" height="9" viewBox="0 0 36 9" fill="none" stroke="#d8d8d8" stroke-width="1.200"><path d="M1.500 6l3.500-3.500 3.500 3.500"/><path d="M25 1l6.500 6.500M31.500 1l-6.500 6.500"/></svg>
  </div>
  <div class="dt">
    <svg style="left:7px;top:3.500px" width="12" height="12" viewBox="0 0 12 12" fill="none" stroke="#a8a8a8" stroke-width="1"><path d="M9.500 4.500v-3.500h-8.500v8.500h3"/><path d="M5 4.500l1.800 6 1.200-2.300 2.300 2.500.9-.9-2.400-2.300 2.300-1.100z" fill="#a8a8a8" stroke="none"/></svg>
    <div class="sel" style="left:29.500px;width:39px"></div>
    <span style="left:38px;color:#fff">Wxml</span>
    <span style="left:77px">Console</span>
    <span style="left:124px">Sources</span>
    <span style="left:171px">Network</span>
    <span style="left:221px">Memory</span>
    <span style="left:265.500px;top:1.500px;font-size:11px;color:#a8a8a8">»</span>
    <svg style="left:308.500px;top:4.500px" width="40" height="10" viewBox="0 0 40 10"><path d="M4.500 .8L9 8.800H0z" fill="#f4bd00"/><path d="M18.500 1.500h8v5.500h-5l-2 2v-2h-1z" fill="#3b82f0"/></svg>
    <span style="left:320.500px;color:#d8d8d8">3</span><span style="left:338px;color:#d8d8d8">1</span>
    <i class="a" style="left:350.500px;top:3.500px;width:1px;height:11px;background:#484848"></i>
    <svg style="left:354px;top:3.500px" width="56" height="12" viewBox="0 0 56 12" fill="none" stroke="#a8a8a8"><circle cx="6" cy="6" r="2.600" stroke-width="2.200"/><path d="M6 .8v1.600M6 9.600v1.600M.8 6h1.600M9.600 6h1.600M2.300 2.300l1.200 1.200M8.500 8.500l1.200 1.200M2.300 9.700l1.200-1.200M8.500 3.500l1.200-1.200" stroke-width="1.700"/><g fill="#a8a8a8" stroke="none"><circle cx="26" cy="2.200" r="1"/><circle cx="26" cy="6" r="1"/><circle cx="26" cy="9.800" r="1"/></g><rect x="43.500" y="2" width="8" height="6" stroke-width="1.100"/><path d="M41.500 4.500v5.500h8" stroke-width="1.100"/></svg>
  </div>
  <div class="wx">
<div class="cl" style="left:10.0px;top:20.80px"><span style="color:#5db0d7">&lt;page&gt;</span></div>
<svg style="left:12.6px;top:34.57px" width="5" height="6" viewBox="0 0 5 6"><path d="M.5 .3L4.500 3L.5 5.700z" fill="#a0a0a0"/></svg>
<div class="cl" style="left:18.9px;top:32.97px"><span style="color:#5db0d7">&lt;view</span><span style="color:#9bbbdc"> class</span><span style="color:#9bbbdc">=</span><span style="color:#e8e8e8">"</span><span style="color:#f29766">show-nan</span><span style="color:#e8e8e8">"</span><span style="color:#5db0d7">&gt;</span><span style="color:#e8e8e8">…</span><span style="color:#5db0d7">&lt;/view&gt;</span></div>
<div class="cl" style="left:18.9px;top:45.14px"><span style="color:#5db0d7">&lt;image</span><span style="color:#9bbbdc"> class</span><span style="color:#9bbbdc">=</span><span style="color:#e8e8e8">"</span><span style="color:#f29766">love</span><span style="color:#e8e8e8">"</span><span style="color:#9bbbdc"> src</span><span style="color:#9bbbdc">=</span><span style="color:#e8e8e8">"</span><span style="color:#f29766">../../res/images/love.png</span><span style="color:#e8e8e8">"</span><span style="color:#9bbbdc"> role</span><span style="color:#9bbbdc">=</span><span style="color:#e8e8e8">"</span><span style="color:#f29766">img</span><span style="color:#e8e8e8">"</span><span style="color:#5db0d7">&gt;&lt;/image&gt;</span></div>
<svg style="left:12.6px;top:58.91px" width="5" height="6" viewBox="0 0 5 6"><path d="M.5 .3L4.500 3L.5 5.700z" fill="#a0a0a0"/></svg>
<div class="cl" style="left:18.9px;top:57.31px"><span style="color:#5db0d7">&lt;view</span><span style="color:#9bbbdc"> class</span><span style="color:#9bbbdc">=</span><span style="color:#e8e8e8">"</span><span style="color:#f29766">show-nv</span><span style="color:#e8e8e8">"</span><span style="color:#5db0d7">&gt;</span><span style="color:#e8e8e8">…</span><span style="color:#5db0d7">&lt;/view&gt;</span></div>
<div class="cl" style="left:18.9px;top:69.48px"><span style="color:#5db0d7">&lt;navigator</span><span style="color:#9bbbdc"> class</span><span style="color:#9bbbdc">=</span><span style="color:#e8e8e8">"</span><span style="color:#f29766">link</span><span style="color:#e8e8e8">"</span><span style="color:#9bbbdc"> url</span><span style="color:#9bbbdc">=</span><span style="color:#e8e8e8">"</span><span style="color:#f29766">/pages/detail/detail?indexNan=0&amp;&amp;indexNv=0</span><span style="color:#e8e8e8">"</span><span style="color:#9bbbdc"> role</span><span style="color:#9bbbdc">=</span></div>
<div class="cl" style="left:18.9px;top:81.65px"><span style="color:#e8e8e8">"</span><span style="color:#f29766">navigation</span><span style="color:#e8e8e8">"</span><span style="color:#5db0d7">&gt;</span><span style="color:#e8e8e8" class=cj>星座配对</span><span style="color:#5db0d7">&lt;/navigator&gt;</span></div>
<div class="cl" style="left:10.0px;top:93.82px"><span style="color:#5db0d7">&lt;/page&gt;</span></div>
</div>

  <div class="hr"></div>
  <div class="st">
    <div class="sel" style="left:0;width:36px;height:19px"></div>
    <span style="left:6px;color:#fff">Styles</span>
    <span style="left:43px">Computed</span>
    <span style="left:97.500px">Dataset</span>
    <span style="left:140.500px">Component Data</span>
    <span style="left:220px">Scope Data</span>
  </div>
  <div class="fl">Filter
    <span class="a" style="left:367.500px;top:2.500px;line-height:19px;font-family:'Liberation Mono',monospace;font-weight:bold;font-size:8.500px;color:#cfcfcf;letter-spacing:-.3px">.cls</span>
    <svg style="left:394.500px;top:5.500px" width="14" height="12" viewBox="0 0 14 12" fill="none" stroke="#6a6a6a" stroke-width="1"><path d="M5 1.500v7M1.500 5h7"/><path d="M12.500 8l-3 3h3z" fill="#6a6a6a" stroke="none"/></svg>
  </div>
</div>
<div id="status">
  <svg style="left:10px;top:5px" width="40" height="10" viewBox="0 0 40 10" fill="none" stroke="#a4a4a4" stroke-width=".9"><circle cx="5" cy="5" r="4.300"/><path d="M3.300 3.300l3.400 3.400M6.700 3.300l-3.400 3.400"/><path d="M25 1l4.500 8h-9z"/><path d="M25 4v2.500M25 7.500v.8"/></svg>
  <span style="left:22px">0</span><span style="left:42px">0</span>
  <span style="left:341px">行 1，列 1</span>
  <span style="left:393px">空格: 4</span>
  <span style="left:431px">UTF-8</span>
  <span style="left:465px">LF</span>
  <span style="left:484.500px">JavaScript</span>
  <svg style="left:537px;top:4.500px" width="10" height="11" viewBox="0 0 10 11" fill="none" stroke="#e0e0e0" stroke-width="1"><path d="M1 8.500h8l-1.200-1.500v-3a2.800 2.800 0 0 0-5.600 0v3z"/><path d="M4 10h2"/></svg>
  <span style="left:551px">1</span>
</div>
</div>
</body>
</html>
